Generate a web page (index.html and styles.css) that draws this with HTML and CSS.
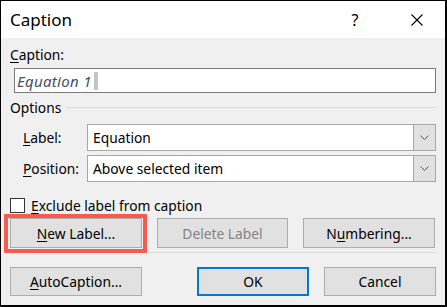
FILE: index.html
```html
<!DOCTYPE html>
<html>
<head>
<meta charset="utf-8">
<link rel="stylesheet" href="styles.css">
</head>
<body>
<div class="window">
  <div class="titlebar">
    <span class="title">Caption</span>
    <span class="help">?</span>
    <span class="close">
      <svg width="12" height="12" viewBox="0 0 12 12"><path d="M0.5 0.5 L11.5 11.5 M11.5 0.5 L0.5 11.5" stroke="#000" stroke-width="1.1" fill="none"/></svg>
    </span>
  </div>
  <div class="content">
    <div class="caption-label"><u>C</u>aption:</div>
    <div class="textbox"><span class="value">Equation 1</span><span class="cursor"></span></div>
    <div class="group-head"><span>Options</span><span class="rule"></span></div>
    <div class="field-row">
      <span class="field-label"><u>L</u>abel:</span>
      <div class="select"><span class="select-text">Equation</span><span class="drop"><svg width="9" height="5" viewBox="0 0 9 5"><path d="M0.5 0.5 L4.5 4.5 L8.5 0.5" stroke="#555" stroke-width="1" fill="none"/></svg></span></div>
    </div>
    <div class="field-row">
      <span class="field-label"><u>P</u>osition:</span>
      <div class="select"><span class="select-text">Above selected item</span><span class="drop"><svg width="9" height="5" viewBox="0 0 9 5"><path d="M0.5 0.5 L4.5 4.5 L8.5 0.5" stroke="#555" stroke-width="1" fill="none"/></svg></span></div>
    </div>
    <div class="check-row"><span class="checkbox"></span><span><u>E</u>xclude label from caption</span></div>
    <div class="btn-row">
      <div class="highlight"><div class="btn"><u>N</u>ew Label...</div></div>
      <div class="btn disabled">Delete Label</div>
      <div class="btn">N<u>u</u>mbering...</div>
    </div>
    <div class="separator"></div>
    <div class="btn-row2">
      <div class="btn auto"><u>A</u>utoCaption...</div>
      <div class="spacer"></div>
      <div class="btn ok">OK</div>
      <div class="btn cancel">Cancel</div>
    </div>
  </div>
</div>
</body>
</html>
```

FILE: styles.css
```css
html, body {
  margin: 0;
  padding: 0;
}
body {
  width: 447px;
  height: 307px;
  font-family: "Noto Sans", "Open Sans", sans-serif;
  font-size: 13.8px;
  color: #000;
}
.window {
  box-sizing: border-box;
  width: 447px;
  height: 307px;
  border-left: 1px solid #000;
  border-top: 1px solid #000;
  border-right: 2px solid #000;
  border-bottom: 2px solid #000;
  background: #f0f0f0;
  display: flex;
  flex-direction: column;
}
.titlebar {
  height: 37px;
  background: #fff;
  display: flex;
  align-items: center;
  flex: none;
}
.title {
  font-size: 17px;
  margin-left: 9px;
  flex: 1;
}
.help {
  font-size: 16px;
  width: 20px;
  text-align: center;
  margin-right: 46px;
}
.close {
  width: 12px;
  height: 12px;
  display: flex;
  margin-right: 22px;
}
.content {
  padding: 0 9px;
  flex: 1;
  display: flex;
  flex-direction: column;
}
u {
  text-decoration-thickness: 1px;
  text-underline-offset: 2px;
}
.caption-label {
  margin-top: 8px;
  height: 18px;
  line-height: 18px;
}
.textbox {
  box-sizing: border-box;
  margin: 4px 0 0 4px;
  height: 25px;
  background: #fff;
  border: 1px solid #7a7a7a;
  display: flex;
  align-items: center;
  padding-left: 2px;
}
.value {
  font-style: italic;
  font-size: 15px;
  color: #44505f;
  letter-spacing: 0.3px;
}
.cursor {
  width: 4px;
  height: 18px;
  background: #c4c4c4;
  margin-left: 2px;
}
.group-head {
  margin-top: 6px;
  height: 16px;
  display: flex;
  align-items: center;
}
.rule {
  flex: 1;
  height: 1px;
  background: #dcdcdc;
  margin-left: 6px;
}
.field-row {
  display: flex;
  align-items: center;
  margin-top: 9px;
  padding-left: 13px;
  height: 27px;
}
.field-row + .field-row {
  margin-top: 4px;
}
.field-label {
  width: 64px;
  flex: none;
}
.select {
  box-sizing: border-box;
  flex: 1;
  height: 27px;
  background: #fff;
  border: 1px solid #a8a8a8;
  display: flex;
  align-items: center;
}
.select-text {
  flex: 1;
  padding-left: 5px;
}
.drop {
  box-sizing: border-box;
  width: 22px;
  height: 100%;
  background: #e1e1e1;
  border-left: 1px solid #a8a8a8;
  display: flex;
  align-items: center;
  justify-content: center;
}
.check-row {
  margin-top: 15px;
  display: flex;
  align-items: center;
  height: 16px;
}
.checkbox {
  box-sizing: border-box;
  width: 15px;
  height: 15px;
  background: #fff;
  border: 1px solid #333;
  margin-right: 6px;
}
.btn-row {
  margin-top: 5px;
  display: grid;
  grid-template-columns: 132px 131px 132px;
  column-gap: 15px;
  height: 30px;
  position: relative;
}
.btn {
  box-sizing: border-box;
  height: 30px;
  background: #e1e1e1;
  border: 1px solid #adadad;
  display: flex;
  align-items: center;
  justify-content: center;
}
.highlight {
  position: relative;
}
.highlight::after {
  content: "";
  position: absolute;
  left: -6px;
  top: -4px;
  right: -5px;
  bottom: -5px;
  border: 4px solid #f65c4e;
  border-radius: 1px;
  pointer-events: none;
}
.disabled {
  color: #848484;
}
.separator {
  margin-top: 4px;
  height: 1px;
  background: #dcdcdc;
}
.btn-row2 {
  margin-top: 14px;
  display: flex;
}
.btn-row2 .btn {
  height: 29px;
}
.auto {
  width: 132px;
}
.spacer {
  flex: 1;
}
.ok {
  width: 112px;
  border: 2px solid #0078d7;
}
.cancel {
  width: 112px;
  margin-left: 15px;
}
```
